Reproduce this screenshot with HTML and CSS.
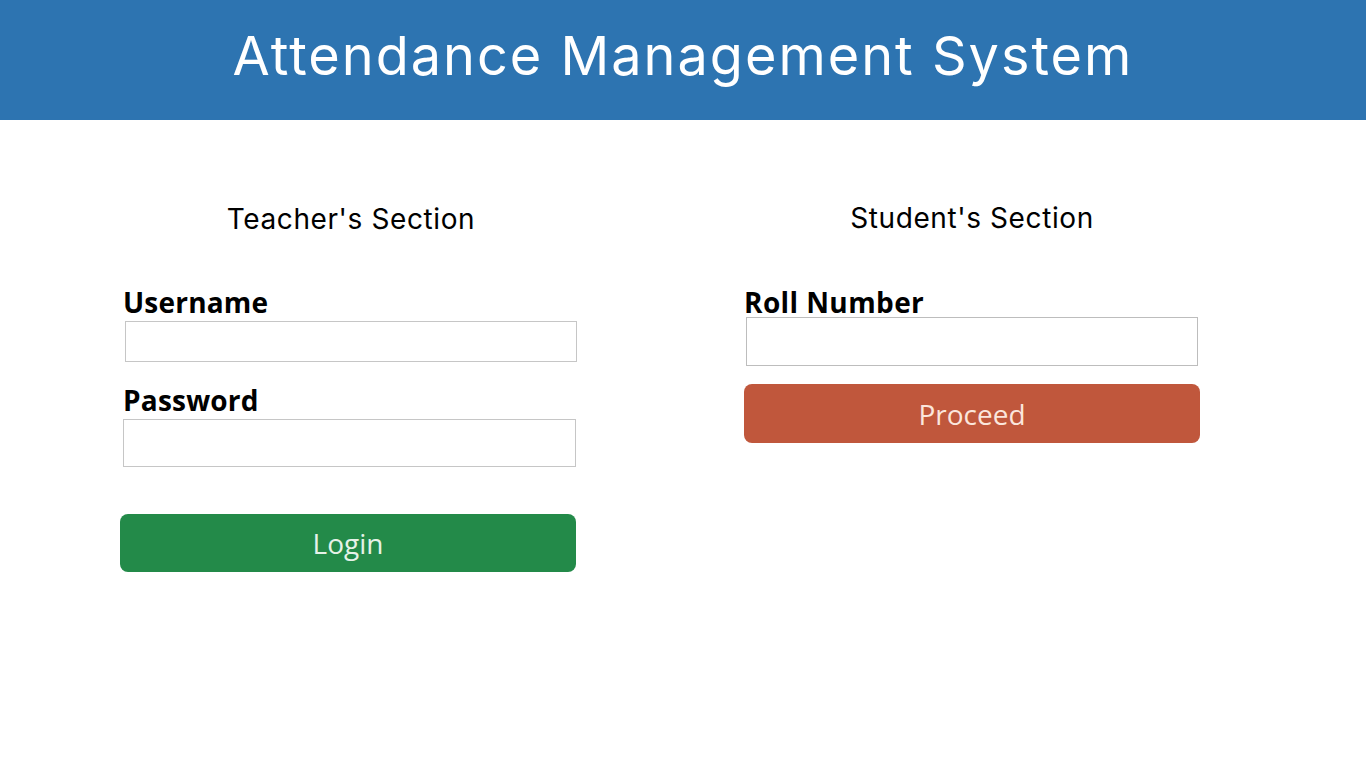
FILE: index.html
```html
<!DOCTYPE html>
<html lang="en">
<head>
<meta charset="utf-8">
<title>Attendance Management System</title>
<link rel="stylesheet" href="styles.css">
</head>
<body>
<header class="topbar">
  <h1 class="title">Attendance Management System</h1>
</header>
<main class="sections">
  <section class="panel">
    <h2 class="panel-title title-teacher">Teacher's Section</h2>
    <label class="field-label" for="username">Username</label>
    <input class="field-input field-user" id="username" type="text">
    <label class="field-label label-pass" for="password">Password</label>
    <input class="field-input field-pass" id="password" type="password">
    <button class="btn btn-login" type="button">Login</button>
  </section>
  <section class="panel">
    <h2 class="panel-title title-student">Student's Section</h2>
    <label class="field-label label-roll" for="roll">Roll Number</label>
    <input class="field-input field-roll" id="roll" type="text">
    <button class="btn btn-proceed" type="button">Proceed</button>
  </section>
</main>
</body>
</html>
```
FILE: styles.css
```css
* { box-sizing: border-box; }
html, body { margin: 0; padding: 0; background: #ffffff; }
body { font-family: "Open Sans", "Liberation Sans", sans-serif; color: #000; }

.topbar {
  height: 120px;
  background: #2d74b1;
  padding-bottom: 8px;
  text-align: center;
}
.title {
  margin: 0;
  font-family: Inter, "Liberation Sans", sans-serif;
  font-weight: 400;
  font-size: 54px;
  line-height: 112px;
  color: #ffffff;
  letter-spacing: 2px;
}

.sections {
  display: flex;
  gap: 168px;
  padding: 85px 0 0 120px;
}
.panel {
  width: 456px;
  display: flex;
  flex-direction: column;
  align-items: flex-start;
}
.panel-title {
  align-self: stretch;
  margin: 0 0 55px 0;
  text-align: center;
  font-family: Inter, "Liberation Sans", sans-serif;
  font-weight: 400;
  font-size: 28px;
  line-height: 28px;
  letter-spacing: 0.6px;
}
.title-teacher { padding-left: 6px; }
.title-student { margin-top: -1px; margin-bottom: 56px; }
.field-label {
  font-weight: 700;
  font-size: 28px;
  line-height: 28px;
  margin-left: 3px;
  letter-spacing: 0.2px;
}
.label-roll { margin-left: 0; letter-spacing: 0.4px; }
.label-pass { margin-top: 24px; }
.field-input {
  display: block;
  border: 1px solid #c6c6c6;
  background: #fff;
  outline: none;
  padding: 0 8px;
  font: inherit;
}
.field-user { width: 452px; height: 41px; margin: 5px 0 0 5px; }
.field-pass { width: 453px; height: 48px; margin: 5px 0 0 3px; }
.field-roll { width: 452px; height: 49px; margin: 1px 0 0 2px; border-color: #bdbdbd; }

.btn {
  width: 456px;
  border: none;
  border-radius: 8px;
  font-family: "Open Sans", "Liberation Sans", sans-serif;
  font-size: 28px;
  cursor: pointer;
}
.btn-login {
  height: 58px;
  margin-top: 47px;
  background: #238a49;
  color: #e6f2e8;
}
.btn-proceed {
  height: 59px;
  margin-top: 18px;
  background: #c0573c;
  color: #fbe6dc;
}
```
